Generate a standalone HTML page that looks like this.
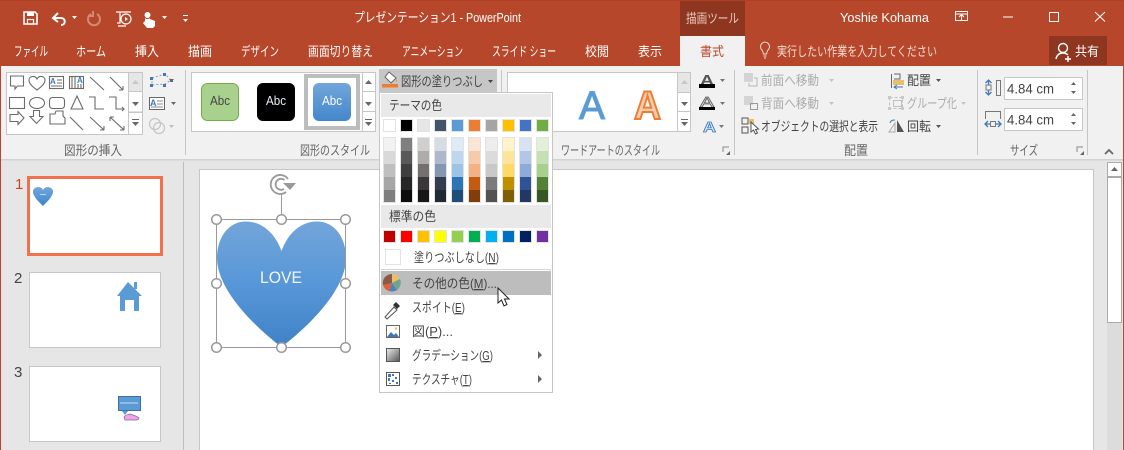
<!DOCTYPE html>
<html lang="ja"><head><meta charset="utf-8"><title>PowerPoint</title>
<style>
html,body{margin:0;padding:0;width:1124px;height:450px;overflow:hidden;background:#E6E6E6}
svg{display:block}
text{font-family:"Liberation Sans","Noto Sans CJK JP",sans-serif;font-size:13px;fill:#444;white-space:pre}
.w text{fill:#fff}
.g text{fill:#666}
.d text{fill:#ababab}
.s{fill:none;stroke:#6b6b6b;stroke-width:1.1}
</style></head><body>
<svg width="1124" height="450" viewBox="0 0 1124 450" xmlns="http://www.w3.org/2000/svg">
<defs>
<linearGradient id="h" x1="0" y1="0" x2="0" y2="1"><stop offset="0" stop-color="#73A5D9"/><stop offset=".5" stop-color="#5797D8"/><stop offset="1" stop-color="#3F82C6"/></linearGradient>
<linearGradient id="b" x1="0" y1="0" x2="0" y2="1"><stop offset="0" stop-color="#71A6DB"/><stop offset="1" stop-color="#4487CC"/></linearGradient>
<linearGradient id="gr" x1="0" y1="0" x2="1" y2="1"><stop offset="0" stop-color="#eee"/><stop offset="1" stop-color="#555"/></linearGradient>
</defs>
<rect width="1124" height="450" fill="#E6E6E6"/>
<!-- title bar -->
<rect width="1124" height="66" fill="#B7472A"/>
<rect width="1124" height="1" fill="#AE3F23"/>
<rect x="680" y="1" width="65" height="35" fill="#8F3620"/>
<rect x="680" y="36" width="65" height="30" fill="#F1F1F1"/>
<rect x="1049" y="36" width="58" height="29" fill="#8F3620"/>
<!-- ribbon -->
<rect x="1" y="66" width="1122" height="93" fill="#F1F1F1"/>
<rect x="1" y="159" width="1122" height="1.5" fill="#D2D2D2"/>
<rect x="0" y="0" width="1" height="450" fill="#B7472A"/>
<rect x="1123" y="0" width="1" height="450" fill="#B7472A"/>
<!-- QAT icons -->
<g fill="none" stroke="#fff" stroke-width="1.6">
<path d="M24 12h11l2 2v10H24z"/><rect x="27" y="12" width="7" height="4" fill="#fff" stroke="none"/><rect x="27.500" y="19.500" width="6" height="4.500" stroke-width="1.200"/>
<path d="M54 18h7c5 0 5 7 0 7" stroke-width="2"/><path d="M58 13l-5 5 5 4" stroke-width="2"/>
<path d="M91 14a6 6 0 1 0 6 0M93 11v5h-5" stroke="#D38A74" stroke-width="2"/>
<path d="M116 12h15M120 12v11h-3M118 26h8" stroke-width="1.200"/><circle cx="126" cy="19" r="5" stroke-width="1.200"/><path d="M125 17v4l3-2z" fill="#fff" stroke="none"/>
</g>
<path d="M145 12h5v7l5 2v5l-2 2h-6l-4-5 2-2z" fill="#fff"/><circle cx="147.500" cy="15" r="3.500" fill="#fff" stroke="#B7472A"/>
<path d="M72 16h5l-2.500 3zM162 16h5l-2.500 3zM183 19h5l-2.500 3z" fill="#fff"/><rect x="183" y="15" width="5" height="1" fill="#fff"/>
<!-- titles -->
<g class="w">
<text x="354" y="22" textLength="167" lengthAdjust="spacingAndGlyphs">プレゼンテーション1 - PowerPoint</text>
<text x="686" y="23" textLength="53" lengthAdjust="spacingAndGlyphs" style="fill:#E9C9BF">描画ツール</text>
<text x="840" y="22" textLength="89" lengthAdjust="spacingAndGlyphs">Yoshie Kohama</text>
<text x="14" y="56" textLength="34" lengthAdjust="spacingAndGlyphs">ファイル</text>
<text x="76" y="56" textLength="30" lengthAdjust="spacingAndGlyphs">ホーム</text>
<text x="135" y="56" textLength="24" lengthAdjust="spacingAndGlyphs">挿入</text>
<text x="188" y="56" textLength="24" lengthAdjust="spacingAndGlyphs">描画</text>
<text x="241" y="56" textLength="38" lengthAdjust="spacingAndGlyphs">デザイン</text>
<text x="308" y="56" textLength="65" lengthAdjust="spacingAndGlyphs">画面切り替え</text>
<text x="402" y="56" textLength="61" lengthAdjust="spacingAndGlyphs">アニメーション</text>
<text x="492" y="56" textLength="64" lengthAdjust="spacingAndGlyphs">スライド ショー</text>
<text x="585" y="56" textLength="24" lengthAdjust="spacingAndGlyphs">校閲</text>
<text x="638" y="56" textLength="24" lengthAdjust="spacingAndGlyphs">表示</text>
<text x="777" y="56" textLength="160" lengthAdjust="spacingAndGlyphs" style="fill:#F3DDD6">実行したい作業を入力してください</text>
<text x="1075" y="56" textLength="24" lengthAdjust="spacingAndGlyphs">共有</text>
</g>
<text x="700" y="56" textLength="24" lengthAdjust="spacingAndGlyphs" style="fill:#B7472A">書式</text>
<!-- window controls -->
<g fill="none" stroke="#fff" stroke-width="1">
<rect x="955.500" y="11.500" width="12" height="9"/><path d="M955 14h13M961.500 20v-5M959 17l2.500-2.500L964 17"/>
<path d="M1003 17h10"/><rect x="1049.500" y="12.500" width="9" height="9"/><path d="M1095 12l10 9.500M1105 12l-10 9.500"/>
<path d="M768 46a4.500 4.500 0 1 0-6 0c1 1 1 3 1.500 4h3c.5-1 .5-3 1.500-4zM763.500 52h3M764 54h2" transform="translate(0 4)" stroke="#F3DDD6"/>
<circle cx="1063" cy="48" r="4.500" stroke-width="1.400"/><path d="M1056 59c1-5 4-6 7-6s4 1 5 2M1068 56v6M1065 59h6" stroke-width="1.400"/>
</g>
<!-- shape gallery -->
<rect x="6.500" y="72.500" width="136" height="62" fill="#fff" stroke="#C6C6C6"/>
<rect x="128.500" y="72.500" width="14" height="19" fill="#E6E6E6" stroke="#C6C6C6"/>
<rect x="128.500" y="91.500" width="14" height="20.500" fill="#fff" stroke="#C6C6C6"/>
<rect x="128.500" y="112.500" width="14" height="22" fill="#fff" stroke="#C6C6C6"/>
<path d="M132 84h7l-3.500-4z" fill="#C8C8C8"/><path d="M132 102h7l-3.500 4z" fill="#666"/><path d="M132 122h7l-3.500 4z" fill="#666"/><rect x="132" y="119" width="7" height="1" fill="#666"/>
<g class="s">
<path d="M10.500 76h13v10h-6l-2.500 3v-3h-4.500z"/>
<path d="M37 90c-4-3-8-6-8-10 0-4 6-5 8-1 2-4 8-3 8 1 0 4-4 7-8 10z"/>
<rect x="49.500" y="76.500" width="14" height="12"/><path d="M57 80h5M57 83h5M51 86h11"/>
<rect x="69.500" y="76.500" width="14" height="12"/><path d="M72 77v11M75 77v11M81 84v4M78 84v4"/>
<path d="M90 77l14 13M110 77l13 13M123 90h-4M123 90v-4"/>
<rect x="9.500" y="97.500" width="15" height="11"/><ellipse cx="37" cy="103" rx="7.500" ry="5.500"/><rect x="49.500" y="97.500" width="15" height="11" rx="3"/>
<path d="M77 96l-6 13h12zM89 97h6v12h9M109 97h7v12h8M122 107l2 2-2 2"/>
<path d="M10 113.500h8v-3l6 6.500-6 6.500v-3h-8zM33.500 109.500h6v6h3.500l-6.500 7-6.500-7h3.500z" transform="translate(0 1)"/>
<path d="M51 113h5l1-3h7v5l2 2v6H51z" transform="translate(-1 1)"/>
<path d="M70 116l13 13M90 116l14 13M104 129h-4M104 129v-4M110 116l14 13M110 116h4M110 116v4M124 129h-4M124 129v-4" transform="translate(0 1)"/>
</g>
<text x="50" y="84" style="font-size:8px;font-weight:bold;fill:#3F78B8">A</text><text x="77" y="83" style="font-size:8px;font-weight:bold;fill:#3F78B8">A</text>
<g>
<path d="M152 78l13-4 6 6-6 4-13 1z" fill="none" stroke="#9a9a9a" stroke-dasharray="2 2"/>
<g fill="#3F78B8"><rect x="150" y="77" width="3" height="3"/><rect x="163" y="73" width="3" height="3"/><rect x="170" y="79" width="3" height="3"/><rect x="150" y="84" width="3" height="3"/><rect x="163" y="84" width="3" height="3"/></g>
<rect x="149.500" y="97.500" width="15" height="12" fill="#fff" stroke="#666"/><text x="150" y="106" style="font-size:9px;font-weight:bold;fill:#3F78B8">A</text><path d="M157 101h6M157 104h6M151 107h12" stroke="#888"/>
<g fill="none" stroke="#C4C4C4" stroke-width="1.200"><circle cx="155" cy="124" r="5.500"/><circle cx="159" cy="128" r="5.500"/></g>
<path d="M169 79h5l-2.500 3zM171 102h5l-2.500 3z" fill="#666"/><path d="M169 125h5l-2.500 3z" fill="#BDBDBD"/>
</g>
<!-- style gallery -->
<rect x="191.500" y="72.500" width="184" height="59" fill="#fff" stroke="#C6C6C6"/>
<rect x="362.500" y="72.500" width="13" height="19" fill="#fff" stroke="#C6C6C6"/><rect x="362.500" y="91.500" width="13" height="20" fill="#fff" stroke="#C6C6C6"/><rect x="362.500" y="111.500" width="13" height="20" fill="#fff" stroke="#C6C6C6"/>
<path d="M365 84h7l-3.500-4zM365 102h7l-3.500 4zM365 122h7l-3.500 4z" fill="#666"/><rect x="365" y="119" width="7" height="1" fill="#666"/>
<rect x="201.500" y="83.500" width="37" height="37" rx="6" fill="#A9D18E" stroke="#70AD47"/>
<rect x="257" y="83" width="38" height="38" rx="6" fill="#000"/>
<rect x="306" y="76" width="52" height="52" fill="#fff" stroke="#BDBDBD" stroke-width="4"/>
<rect x="313" y="83" width="38" height="38" rx="6" fill="url(#b)"/>
<text x="210" y="105" textLength="20" lengthAdjust="spacingAndGlyphs">Abc</text>
<text x="266" y="105" textLength="20" lengthAdjust="spacingAndGlyphs" style="fill:#E8F0F8">Abc</text>
<text x="322" y="105" textLength="20" lengthAdjust="spacingAndGlyphs" style="fill:#fff">Abc</text>
<!-- fill btn -->
<rect x="379" y="69" width="118" height="24" fill="#C6C6C6"/>
<path d="M389 72l7 6-5 5-6-6z" fill="#fff" stroke="#666"/><path d="M396 78l1 3-1 1z" fill="#ED7D31"/>
<rect x="382" y="84" width="16" height="3.500" fill="#ED7D31"/>
<text x="401" y="86" textLength="82" lengthAdjust="spacingAndGlyphs">図形の塗りつぶし</text>
<path d="M488 80h5l-2.500 3z" fill="#444"/>
<!-- wordart gallery -->
<rect x="507.500" y="72.500" width="183" height="59" fill="#fff" stroke="#C6C6C6"/>
<rect x="677.500" y="72.500" width="13" height="20" fill="#E6E6E6" stroke="#C6C6C6"/><rect x="677.500" y="92.500" width="13" height="19" fill="#fff" stroke="#C6C6C6"/><rect x="677.500" y="111.500" width="13" height="20" fill="#fff" stroke="#C6C6C6"/>
<path d="M681 84h7l-3.500-4z" fill="#C8C8C8"/><path d="M681 102h7l-3.500 4zM681 122h7l-3.500 4z" fill="#666"/><rect x="681" y="119" width="7" height="1" fill="#666"/>
<text x="579" y="119" style="font-size:40px;fill:#5B9BD5;stroke:#5B9BD5;stroke-width:1" textLength="26" lengthAdjust="spacingAndGlyphs">A</text>
<text x="634" y="119" style="font-size:40px;font-weight:bold;fill:#F8CBAD;stroke:#ED7D31;stroke-width:2" textLength="27" lengthAdjust="spacingAndGlyphs">A</text>
<!-- wordart right -->
<text x="700" y="85" style="font-size:15px;font-weight:bold;fill:#555" textLength="14" lengthAdjust="spacingAndGlyphs">A</text><rect x="699" y="84" width="16" height="4" fill="#000"/>
<text x="700" y="107" style="font-size:15px;fill:#fff;stroke:#666;stroke-width:.8" textLength="14" lengthAdjust="spacingAndGlyphs">A</text><rect x="699" y="107" width="16" height="3" fill="#000"/>
<text x="703" y="132" style="font-size:15px;font-weight:bold;fill:#DCE9F6;stroke:#3F78B8;stroke-width:.8" textLength="13" lengthAdjust="spacingAndGlyphs">A</text>
<path d="M720 79h5l-2.500 3zM720 102h5l-2.500 3zM719 125h5l-2.500 3z" fill="#777"/>
<!-- arrange -->
<rect x="744" y="73" width="9" height="9" fill="#D4D4D4"/><path d="M754 78h3v8h-8v-3" fill="none" stroke="#B5B5B5"/>
<rect x="744" y="96" width="9" height="9" fill="#D4D4D4"/><rect x="750.500" y="103.500" width="7" height="6" fill="none" stroke="#999"/>
<path d="M742 119h6v6h-6zM742 128h6v6h-6z" fill="none" stroke="#555" transform="translate(0 -1)"/><rect x="749" y="119" width="5" height="5" fill="#E8BE6F"/><path d="M751 122v10l2.500-2 2 4 2-1-2-3.500 3-.5z" fill="#fff" stroke="#555"/>
<g class="d"><text x="761" y="85" textLength="58" lengthAdjust="spacingAndGlyphs">前面へ移動</text><text x="761" y="108" textLength="58" lengthAdjust="spacingAndGlyphs">背面へ移動</text><text x="907" y="108" textLength="50" lengthAdjust="spacingAndGlyphs">グループ化</text></g>
<path d="M829 79h5l-2.500 3zM829 102h5l-2.500 3zM961 102h5l-2.500 3z" fill="#C4C4C4"/>
<text x="761" y="131" textLength="117" lengthAdjust="spacingAndGlyphs">オブジェクトの選択と表示</text>
<text x="907" y="85" textLength="24" lengthAdjust="spacingAndGlyphs">配置</text>
<text x="907" y="131" textLength="24" lengthAdjust="spacingAndGlyphs">回転</text>
<path d="M936 79h5l-2.500 3zM936 125h5l-2.500 3z" fill="#555"/>
<path d="M891.500 74v14M894 74h6v5h-6" fill="none" stroke="#666"/><rect x="893" y="80" width="11" height="5" fill="#E8BE6F"/><path d="M903 87h-9M897 85l-3 2 3 2" fill="none" stroke="#3F78B8"/>
<rect x="889.500" y="97.500" width="13" height="11" fill="none" stroke="#C0C0C0" stroke-dasharray="3 2"/><rect x="893.500" y="100.500" width="8" height="6" fill="none" stroke="#C0C0C0"/><rect x="888" y="96" width="3" height="3" fill="#C8C8C8"/><rect x="901" y="96" width="3" height="3" fill="#C8C8C8"/><rect x="888" y="107" width="3" height="3" fill="#C8C8C8"/><rect x="901" y="107" width="3" height="3" fill="#C8C8C8"/>
<path d="M889 132l6-9v9z" fill="none" stroke="#AAA"/><path d="M897 120l7 12h-7z" fill="#555"/><path d="M890 123c1-3 3-3 5-3" fill="none" stroke="#3F78B8"/>
<!-- size -->
<rect x="1004.500" y="77.500" width="78" height="22" fill="#fff" stroke="#C6C6C6"/><rect x="1004.500" y="108.500" width="78" height="22" fill="#fff" stroke="#C6C6C6"/>
<text x="1007" y="93.500" textLength="47" lengthAdjust="spacingAndGlyphs" style="font-size:14px">4.84 cm</text>
<text x="1007" y="124.500" textLength="47" lengthAdjust="spacingAndGlyphs" style="font-size:14px">4.84 cm</text>
<path d="M1071 85h5l-2.500-3zM1071 91h5l-2.500 3zM1071 116h5l-2.500-3zM1071 122h5l-2.500 3z" fill="#666"/>
<rect x="996.500" y="80.500" width="4" height="15" fill="none" stroke="#777"/>
<path d="M988.500 80v15M985.500 83l3-3 3 3M985.500 92l3 3 3-3" fill="none" stroke="#3F78B8" stroke-width="1.300"/><rect x="986" y="85" width="5" height="5" fill="#F1F1F1" stroke="#777"/>
<path d="M985.500 119v-7.500h15v7.500" fill="none" stroke="#777"/>
<path d="M985 124h16M988 121l-3 3 3 3M998 121l3 3-3 3" fill="none" stroke="#3F78B8" stroke-width="1.300"/><rect x="990.500" y="121.500" width="5" height="5" fill="#F1F1F1" stroke="#777"/>
<!-- group labels and dividers -->
<g fill="#C6C6C6"><rect x="185" y="70" width="1" height="85"/><rect x="501" y="70" width="1" height="85"/><rect x="734" y="70" width="1" height="85"/><rect x="977" y="70" width="1" height="85"/><rect x="1087" y="70" width="1" height="85"/></g>
<g class="g">
<text x="64" y="155" textLength="58" lengthAdjust="spacingAndGlyphs">図形の挿入</text>
<text x="300" y="155" textLength="70" lengthAdjust="spacingAndGlyphs">図形のスタイル</text>
<text x="561" y="155" textLength="99" lengthAdjust="spacingAndGlyphs">ワードアートのスタイル</text>
<text x="844" y="155" textLength="24" lengthAdjust="spacingAndGlyphs">配置</text>
<text x="1010" y="155" textLength="28" lengthAdjust="spacingAndGlyphs">サイズ</text>
</g>
<path d="M723 152v-5h6M1077 152v-5h6" fill="none" stroke="#888"/><path d="M726 155h4v-4zM1080 155h4v-4z" fill="#666"/>
<path d="M1105 154l4-4 4 4" fill="none" stroke="#666" stroke-width="1.800"/>
<!-- slide pane -->
<rect x="183" y="162" width="1" height="288" fill="#BDBDBD"/>
<text x="15" y="189" style="font-size:15px;fill:#D04423">1</text>
<text x="14" y="283" style="font-size:15px">2</text>
<text x="14" y="377" style="font-size:15px">3</text>
<rect x="28.500" y="177.500" width="133" height="77" fill="#fff" stroke="#F1704F" stroke-width="3"/>
<rect x="29.500" y="272.500" width="131" height="75" fill="#fff" stroke="#C6C6C6"/>
<rect x="29.500" y="366.500" width="131" height="75" fill="#fff" stroke="#C6C6C6"/>
<path d="M43 190c-1.500-4-9-4-10 1-.5 5 6 11 10 15 4-4 10.500-10 10-15-1-5-8.500-5-10-1z" fill="url(#h)"/><rect x="40" y="194" width="6" height="1" fill="#BBD4EE"/>
<path d="M128 282l14 14h-3v15h-5v-11h-9v11h-5v-15h-3z" fill="#5B9BD5"/><rect x="134" y="282" width="3" height="7" fill="#5B9BD5"/>
<rect x="118.500" y="396.500" width="22" height="14" fill="#5B9BD5" stroke="#3F6FA3"/><path d="M122 411h6l-3 4z" fill="#5B9BD5"/><rect x="120" y="402.500" width="18" height="1" fill="#C8DDF2"/>
<path d="M124 417c2-3 4-2 6-3 3 1 7 2 9 4 0 2-2 2-5 2h-9z" fill="#F4A0F0" stroke="#777" stroke-width=".7"/>
<!-- slide -->
<rect x="199.500" y="169.500" width="894" height="290" fill="#fff" stroke="#C6C6C6"/>
<path d="M281.500 251C275 233 262 221.500 246 221.500 228 221.500 217 238 217 258 217 290 255 327 281.500 347 308 327 346 290 346 258 346 238 335 221.500 317 221.500 301 221.500 288 233 281.500 251Z" fill="url(#h)"/>
<text x="260" y="283" textLength="42" lengthAdjust="spacingAndGlyphs" style="font-size:17px;fill:#F2F7FC">LOVE</text>
<rect x="216.500" y="219.500" width="129" height="128" fill="none" stroke="#999"/>
<path d="M281.500 194v25" stroke="#999" fill="none"/>
<g fill="#fff" stroke="#999" stroke-width="1.500"><circle cx="216.500" cy="219.500" r="4.800"/><circle cx="281.500" cy="219.500" r="4.800"/><circle cx="345.500" cy="219.500" r="4.800"/><circle cx="216.500" cy="283.500" r="4.800"/><circle cx="345.500" cy="283.500" r="4.800"/><circle cx="216.500" cy="347.500" r="4.800"/><circle cx="281.500" cy="347.500" r="4.800"/><circle cx="345.500" cy="347.500" r="4.800"/></g>
<g fill="none" stroke="#999" stroke-width="1.800"><path d="M288 179A9.500 9.500 0 1 0 286 192"/><path d="M284.500 180A5.500 5.500 0 1 0 284 189"/></g><path d="M283 183h13l-6 7z" fill="#999"/>
<!-- scrollbar -->
<rect x="1107.500" y="162.500" width="14" height="160" fill="#fff" stroke="#ABABAB"/>
<rect x="1107" y="176" width="15" height="2" fill="#ABABAB"/>
<rect x="1107" y="323" width="15" height="127" fill="#DCDCDC"/>
<path d="M1111 171h7l-3.500-4z" fill="#666"/>
<!-- menu -->
<rect x="379.500" y="92.500" width="173" height="300" fill="#fff" stroke="#C6C6C6"/>
<rect x="381" y="94" width="170" height="23" fill="#E9E9E9"/><rect x="381" y="205" width="170" height="23" fill="#E9E9E9"/>
<text x="389" y="110" textLength="53" lengthAdjust="spacingAndGlyphs">テーマの色</text>
<text x="389" y="221" textLength="47" lengthAdjust="spacingAndGlyphs">標準の色</text>
<g stroke="#E2E2E2">
<rect x="383.500" y="119.500" width="12" height="12" fill="#FFF"/><rect x="400.500" y="119.500" width="12" height="12" fill="#000"/><rect x="417.500" y="119.500" width="12" height="12" fill="#E7E6E6"/><rect x="434.500" y="119.500" width="12" height="12" fill="#44546A"/><rect x="451.500" y="119.500" width="12" height="12" fill="#5B9BD5"/><rect x="468.500" y="119.500" width="12" height="12" fill="#ED7D31"/><rect x="485.500" y="119.500" width="12" height="12" fill="#A5A5A5"/><rect x="502.500" y="119.500" width="12" height="12" fill="#FFC000"/><rect x="519.500" y="119.500" width="12" height="12" fill="#4472C4"/><rect x="536.500" y="119.500" width="12" height="12" fill="#70AD47"/>
<rect x="383.500" y="230.500" width="12" height="12" fill="#C00000"/><rect x="400.500" y="230.500" width="12" height="12" fill="#F00"/><rect x="417.500" y="230.500" width="12" height="12" fill="#FFC000"/><rect x="434.500" y="230.500" width="12" height="12" fill="#FF0"/><rect x="451.500" y="230.500" width="12" height="12" fill="#92D050"/><rect x="468.500" y="230.500" width="12" height="12" fill="#00B050"/><rect x="485.500" y="230.500" width="12" height="12" fill="#00B0F0"/><rect x="502.500" y="230.500" width="12" height="12" fill="#0070C0"/><rect x="519.500" y="230.500" width="12" height="12" fill="#002060"/><rect x="536.500" y="230.500" width="12" height="12" fill="#7030A0"/>
<rect x="383.500" y="137.500" width="12" height="65" fill="#fff"/><rect x="400.500" y="137.500" width="12" height="65" fill="#fff"/><rect x="417.500" y="137.500" width="12" height="65" fill="#fff"/><rect x="434.500" y="137.500" width="12" height="65" fill="#fff"/><rect x="451.500" y="137.500" width="12" height="65" fill="#fff"/><rect x="468.500" y="137.500" width="12" height="65" fill="#fff"/><rect x="485.500" y="137.500" width="12" height="65" fill="#fff"/><rect x="502.500" y="137.500" width="12" height="65" fill="#fff"/><rect x="519.500" y="137.500" width="12" height="65" fill="#fff"/><rect x="536.500" y="137.500" width="12" height="65" fill="#fff"/>
</g>
<g>
<rect x="384" y="138" width="11" height="13" fill="#F2F2F2"/><rect x="384" y="151" width="11" height="13" fill="#D9D9D9"/><rect x="384" y="164" width="11" height="13" fill="#BFBFBF"/><rect x="384" y="177" width="11" height="13" fill="#A6A6A6"/><rect x="384" y="190" width="11" height="12" fill="#7F7F7F"/>
<rect x="401" y="138" width="11" height="13" fill="#7F7F7F"/><rect x="401" y="151" width="11" height="13" fill="#595959"/><rect x="401" y="164" width="11" height="13" fill="#3F3F3F"/><rect x="401" y="177" width="11" height="13" fill="#262626"/><rect x="401" y="190" width="11" height="12" fill="#0D0D0D"/>
<rect x="418" y="138" width="11" height="13" fill="#D0CECE"/><rect x="418" y="151" width="11" height="13" fill="#AFABAB"/><rect x="418" y="164" width="11" height="13" fill="#757070"/><rect x="418" y="177" width="11" height="13" fill="#3A3838"/><rect x="418" y="190" width="11" height="12" fill="#171717"/>
<rect x="435" y="138" width="11" height="13" fill="#D6DCE4"/><rect x="435" y="151" width="11" height="13" fill="#ADB9CA"/><rect x="435" y="164" width="11" height="13" fill="#8497B0"/><rect x="435" y="177" width="11" height="13" fill="#323E4F"/><rect x="435" y="190" width="11" height="12" fill="#222A35"/>
<rect x="452" y="138" width="11" height="13" fill="#DEEBF6"/><rect x="452" y="151" width="11" height="13" fill="#BDD7EE"/><rect x="452" y="164" width="11" height="13" fill="#9DC3E6"/><rect x="452" y="177" width="11" height="13" fill="#2E75B5"/><rect x="452" y="190" width="11" height="12" fill="#1E4E79"/>
<rect x="469" y="138" width="11" height="13" fill="#FBE5D5"/><rect x="469" y="151" width="11" height="13" fill="#F7CAAC"/><rect x="469" y="164" width="11" height="13" fill="#F4B183"/><rect x="469" y="177" width="11" height="13" fill="#C55A11"/><rect x="469" y="190" width="11" height="12" fill="#833C0B"/>
<rect x="486" y="138" width="11" height="13" fill="#EDEDED"/><rect x="486" y="151" width="11" height="13" fill="#DBDBDB"/><rect x="486" y="164" width="11" height="13" fill="#C9C9C9"/><rect x="486" y="177" width="11" height="13" fill="#7B7B7B"/><rect x="486" y="190" width="11" height="12" fill="#525252"/>
<rect x="503" y="138" width="11" height="13" fill="#FFF2CC"/><rect x="503" y="151" width="11" height="13" fill="#FEE599"/><rect x="503" y="164" width="11" height="13" fill="#FFD965"/><rect x="503" y="177" width="11" height="13" fill="#BF8F00"/><rect x="503" y="190" width="11" height="12" fill="#7F6000"/>
<rect x="520" y="138" width="11" height="13" fill="#D9E2F3"/><rect x="520" y="151" width="11" height="13" fill="#B4C6E7"/><rect x="520" y="164" width="11" height="13" fill="#8EAADB"/><rect x="520" y="177" width="11" height="13" fill="#2F5496"/><rect x="520" y="190" width="11" height="12" fill="#1F3864"/>
<rect x="537" y="138" width="11" height="13" fill="#E2EFD9"/><rect x="537" y="151" width="11" height="13" fill="#C5E0B3"/><rect x="537" y="164" width="11" height="13" fill="#A8D08D"/><rect x="537" y="177" width="11" height="13" fill="#538135"/><rect x="537" y="190" width="11" height="12" fill="#375623"/>
</g>
<rect x="385.500" y="249.500" width="15" height="15" fill="#fff" stroke="#E2E2E2"/>
<rect x="381" y="269" width="170" height="1" fill="#D4D4D4"/>
<rect x="381" y="271" width="170" height="24" fill="#BDBDBD"/>
<!-- pie -->
<path d="M392 283v-9a9 9 0 0 1 8 5z" fill="#E8BE6F"/><path d="M392 283l8-4a9 9 0 0 1-3 11z" fill="#6FA58E"/><path d="M392 283l5 7a9 9 0 0 1-8 1z" fill="#4F81BD"/><path d="M392 283l-3 8a9 9 0 0 1-6-6z" fill="#E0603A"/><path d="M392 283l-9 2a9 9 0 0 1 9-11z" fill="#8A5A44"/>
<!-- dropper -->
<path d="M385 317l9-10 3 3-10 9z" fill="#fff" stroke="#555"/><path d="M393 305l3-3 4 4-3 3z" fill="#333"/>
<!-- picture icon -->
<rect x="386.500" y="325.500" width="13" height="12" fill="#fff" stroke="#666"/><path d="M387 337l4-5 3 3 2-2 3 4z" fill="#3F78B8"/><circle cx="396" cy="328.500" r="1.300" fill="#E8BE6F"/>
<rect x="386.500" y="348.500" width="13" height="13" fill="url(#gr)" stroke="#555"/>
<rect x="386.500" y="372.500" width="13" height="13" fill="#fff" stroke="#555"/>
<g fill="#3F78B8"><rect x="388" y="374" width="3" height="3"/><rect x="392" y="374" width="2" height="2"/><rect x="388" y="378" width="2" height="3"/><rect x="395" y="377" width="2" height="2"/><rect x="392" y="380" width="2" height="2"/><rect x="396" y="382" width="2" height="2"/><rect x="389" y="383" width="2" height="1"/></g>
<text x="414" y="262" textLength="85" lengthAdjust="spacingAndGlyphs">塗りつぶしなし(<tspan text-decoration="underline">N</tspan>)</text>
<text x="412" y="288" textLength="85" lengthAdjust="spacingAndGlyphs">その他の色(<tspan text-decoration="underline">M</tspan>)...</text>
<text x="412" y="312" textLength="53" lengthAdjust="spacingAndGlyphs">スポイト(<tspan text-decoration="underline">E</tspan>)</text>
<text x="412" y="336" textLength="41" lengthAdjust="spacingAndGlyphs">図(<tspan text-decoration="underline">P</tspan>)...</text>
<text x="412" y="360" textLength="81" lengthAdjust="spacingAndGlyphs">グラデーション(<tspan text-decoration="underline">G</tspan>)</text>
<text x="412" y="384" textLength="60" lengthAdjust="spacingAndGlyphs">テクスチャ(<tspan text-decoration="underline">T</tspan>)</text>
<path d="M538 351l4 4-4 4zM538 375l4 4-4 4z" fill="#666"/>
<!-- cursor -->
<path d="M498 288v15l3.500-3 2.500 6 3-1.500-2.500-5.500h4.500z" fill="#fff" stroke="#222"/>
</svg>
</body></html>
